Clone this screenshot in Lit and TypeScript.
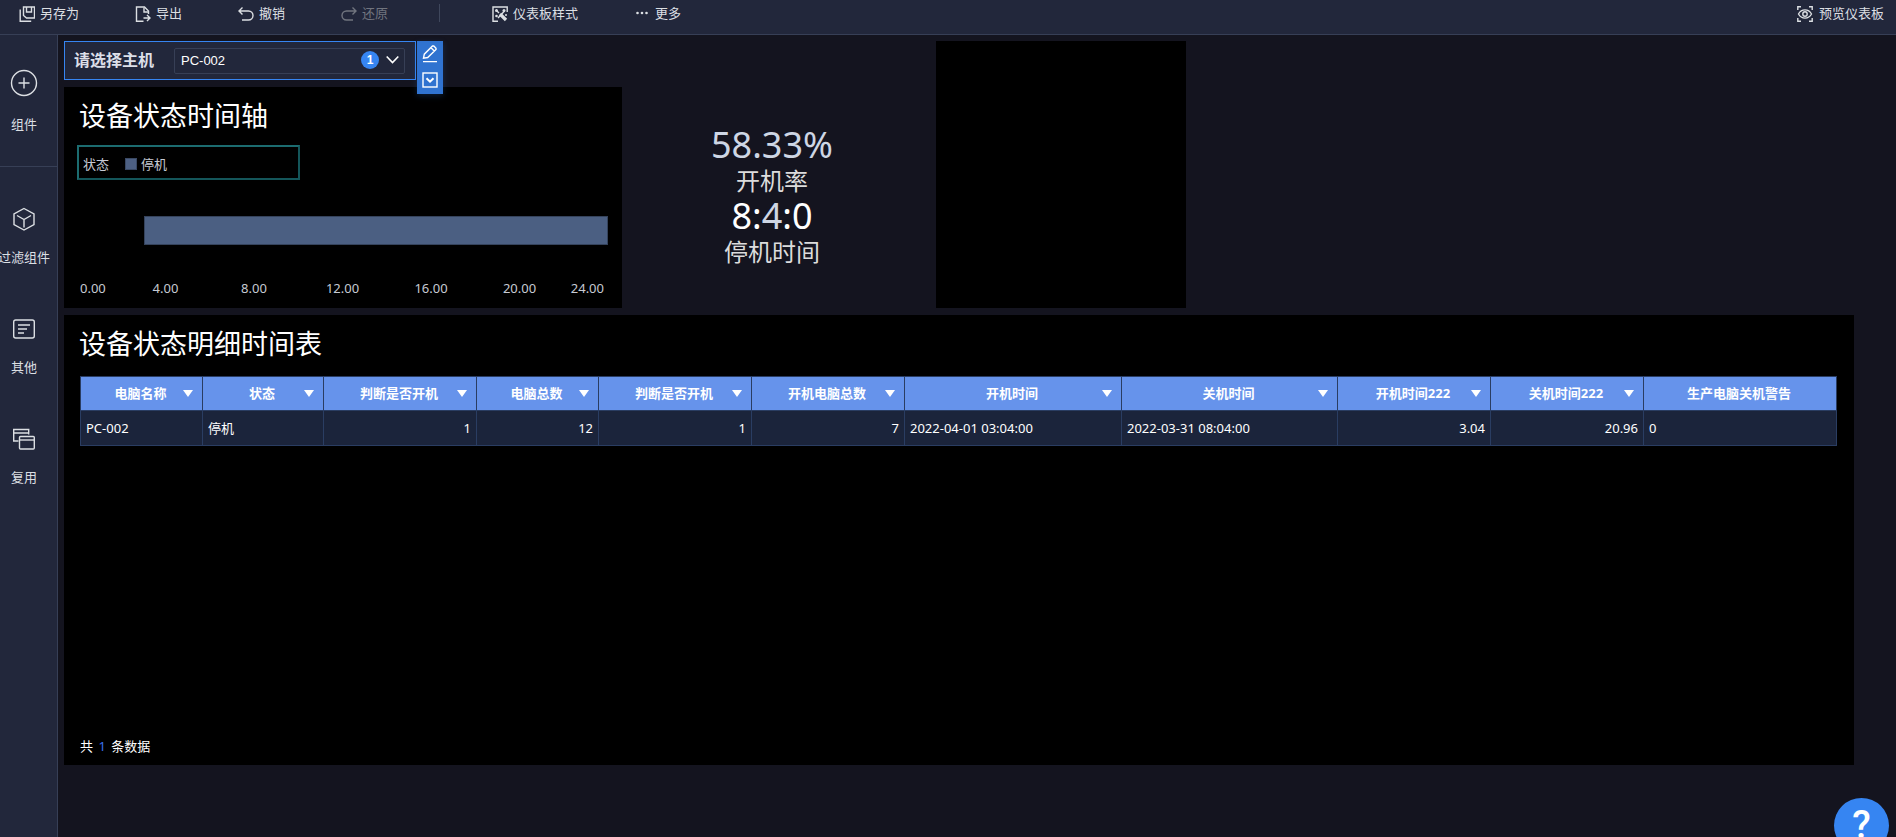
import { LitElement, html, css, svg } from "lit";
import { customElement } from "lit/decorators.js";

const icons = {
  save: svg`<path d="M4.500 1h11v11h-8l-3-2.500z"/><path d="M7.500 1v5h5V1M1.200 3.500v11.700h11"/>`,
  export: svg`<path d="M8.500 15.200h-7V1h8l4 4v3"/><path d="M9 1.500V6h4.500M8.500 12h6M12 9l3 3-3 3"/>`,
  undo: svg`<path d="M4.500 1.500L1 5l3.500 3.500M1 5h9.500a4.500 4.500 0 0 1 0 9H4"/>`,
  redo: svg`<path d="M11.500 1.500L15 5l-3.500 3.500M15 5H5.500a4.500 4.500 0 0 0 0 9H12"/>`,
  style: svg`<path d="M15.200 6V1H1v14.200h5"/><path d="M8 8l6 6" stroke-width="3.200"/><path d="M4 4l3 3M6 12l6.500-7"/><g fill="currentColor" stroke="none"><circle cx="4.500" cy="4.500" r="1.500"/><circle cx="12" cy="4.500" r="1.500"/><circle cx="4.500" cy="10" r="1.300"/><circle cx="14" cy="9" r="1"/></g>`,
  more: svg`<g fill="currentColor" stroke="none"><circle cx="3.500" cy="7" r="1.300"/><circle cx="8" cy="7" r="1.300"/><circle cx="12.500" cy="7" r="1.300"/></g>`,
  preview: svg`<path d="M.800 4V.800H4M12 .800h3.200V4M15.200 12v3.200H12M4 15.200H.800V12"/><path d="M1.500 8C4.500 2.500 11.500 2.500 14.500 8C11.500 13.500 4.500 13.500 1.500 8z"/><circle cx="8" cy="8" r="2.200"/>`,
  plus: svg`<circle cx="14" cy="14" r="12.500"/><path d="M14 8.500v11M8.500 14h11"/>`,
  cube: svg`<path d="M14 3.500l10 5.500v10.500l-10 5.500-10-5.500V9z"/><path d="M7 10.500l7 4 7-4M14 14.500v8"/>`,
  other: svg`<rect x="3.700" y="5" width="20.600" height="18" rx="2"/><path d="M8 10h12M8 14h9M8 18h6"/>`,
  reuse: svg`<path d="M8.500 16H3.700V4.500h15v5M3.700 8h15"/><rect x="9.500" y="11.500" width="14.800" height="12.500" rx="1"/><path d="M9.500 15h15"/>`,
};

const icon = (name: keyof typeof icons, size: number) => html`
  <svg class="icon" width=${size} height=${size} viewBox="0 0 ${size} ${size}" aria-hidden="true">${icons[name]}</svg>
`;

const base = css`
  * { box-sizing: border-box; }
  button {
    font: inherit;
    color: inherit;
    background: none;
    border: 0;
    padding: 0;
    cursor: pointer;
  }
  .icon {
    display: block;
    flex: none;
    fill: none;
    stroke: currentColor;
    stroke-width: 1.4;
  }
`;

@customElement("app-toolbar")
class AppToolbar extends LitElement {
  static styles = [base, css`
    :host {
      display: flex;
      align-items: flex-start;
      height: 35px;
      padding: 4px 12px 0 19px;
      background: #22273b;
      border-bottom: 1px solid #373f56;
      color: #dcdfe3;
    }
    .item {
      display: flex;
      align-items: center;
      gap: 5px;
      height: 20px;
      margin-right: 56px;
      line-height: 18px;
      white-space: nowrap;
    }
    .item span { padding-bottom: 2px; }
    .item:disabled { color: #71757f; cursor: default; }
    .divider { width: 1px; height: 18px; margin-right: 52px; background: #3f475c; }
    .before { margin-right: 51px; }
    .end { margin: 0 0 0 auto; gap: 6px; }
  `];
  render() {
    return html`
      <button class="item">${icon("save", 16)}<span>另存为</span></button>
      <button class="item">${icon("export", 16)}<span>导出</span></button>
      <button class="item">${icon("undo", 16)}<span>撤销</span></button>
      <button class="item before" disabled>${icon("redo", 16)}<span>还原</span></button>
      <span class="divider"></span>
      <button class="item">${icon("style", 16)}<span>仪表板样式</span></button>
      <button class="item">${icon("more", 16)}<span>更多</span></button>
      <button class="item end">${icon("preview", 16)}<span>预览仪表板</span></button>
    `;
  }
}

@customElement("app-sidebar")
class AppSidebar extends LitElement {
  static styles = [base, css`
    :host {
      display: block;
      width: 58px;
      flex: none;
      overflow: hidden;
      background: #22273b;
      border-right: 1px solid #373f56;
      color: #dcdfe3;
    }
    .group { padding-top: 34px; }
    .group + .group { padding-top: 38px; border-top: 1px solid #373f56; }
    .item {
      display: flex;
      flex-direction: column;
      align-items: center;
      gap: 14px;
      width: 48px;
      margin-bottom: 48px;
      line-height: 20px;
      white-space: nowrap;
    }
    .add { gap: 17px; margin-bottom: 32px; }
  `];
  render() {
    return html`
      <div class="group">
        <button class="item add">${icon("plus", 28)}<span>组件</span></button>
      </div>
      <div class="group">
        <button class="item">${icon("cube", 28)}<span>过滤组件</span></button>
        <button class="item">${icon("other", 28)}<span>其他</span></button>
        <button class="item">${icon("reuse", 28)}<span>复用</span></button>
      </div>
    `;
  }
}

@customElement("host-filter")
class HostFilter extends LitElement {
  static styles = [base, css`
    :host {
      position: relative;
      display: flex;
      align-items: center;
      width: 352px;
      height: 39px;
      padding: 0 10px 0 9px;
      background: #22273b;
      border: 1px solid #3685f2;
    }
    .label { width: 100px; padding-bottom: 2px; color: #dcdfe8; font-size: 16px; font-weight: 700; white-space: nowrap; }
    .box { position: relative; flex: 1; display: flex; }
    .select {
      appearance: none;
      width: 100%;
      height: 26px;
      padding: 0 50px 1px 6px;
      border: 1px solid #373f56;
      border-radius: 2px;
      background: transparent;
      color: #fff;
      font: 13px "Liberation Sans", sans-serif;
    }
    .marks {
      position: absolute;
      right: 6px;
      top: 3px;
      display: flex;
      align-items: center;
      gap: 7px;
      pointer-events: none;
      color: #fff;
    }
    .count {
      width: 18px;
      height: 18px;
      border-radius: 50%;
      background: #3685f2;
      font: 700 12px/18px "Liberation Sans", sans-serif;
      text-align: center;
    }
    .marks .icon { stroke-width: 1.6; }
    .tools {
      position: absolute;
      left: 352px;
      top: -1px;
      z-index: 1;
      display: flex;
      flex-direction: column;
      align-items: center;
      gap: 9px;
      width: 26px;
      height: 53px;
      padding-top: 4px;
      background: #3073d0;
      color: #fff;
      box-shadow: 0 2px 6px rgba(48, 115, 208, 0.25);
    }
  `];
  render() {
    return html`
      <label class="label" for="host">请选择主机</label>
      <div class="box">
        <select class="select" id="host"><option>PC-002</option></select>
        <div class="marks">
          <span class="count">1</span>
          <svg class="icon" width="13" height="10" viewBox="0 0 13 10"><path d="M.7 1.500l5.800 6 5.800-6"/></svg>
        </div>
      </div>
      <div class="tools">
        <button aria-label="编辑">
          <svg class="icon" width="16" height="18" viewBox="0 0 16 18"><path d="M1.500 13.200l.8-4L10.500 1h1.300l2.200 2.200v1.300L5.700 12.500zM9 2.800l3.300 3.300M1 16.600h14"/></svg>
        </button>
        <button aria-label="更多">
          <svg class="icon" width="16" height="16" viewBox="0 0 16 16"><rect x="1" y="1" width="14" height="14"/><path d="M4.500 6.200L8 9.700l3.500-3.500" stroke-width="2"/></svg>
        </button>
      </div>
    `;
  }
}

@customElement("status-timeline")
class StatusTimeline extends LitElement {
  private ticks = [0, 4, 8, 12, 16, 20, 24];
  private start = 3.04;
  static styles = [base, css`
    :host { display: block; padding: 11px 14px 10px 13px; background: #000; }
    .title { margin: 0 2px 11px; font-size: 27px; line-height: 36px; font-weight: 400; color: #fff; }
    .legend {
      display: flex;
      align-items: center;
      width: 42%;
      height: 35px;
      padding: 2px 0 0 4px;
      border: 2px solid #14565a;
      border-top-color: #1c6c70;
      border-left-color: #1c6c70;
      color: #c6cad3;
    }
    .swatch { width: 12px; height: 12px; margin: 0 4px 0 16px; background: #4d6083; border: 1px solid #3a4964; }
    .plot { display: flex; justify-content: flex-end; margin: 36px 0 33px; }
    .bar { height: 29px; background: #4b5f82; border: 1px solid #35435c; }
    .axis { display: grid; grid-template-columns: 2fr 4fr 4fr 4fr 4fr 4fr 2fr; line-height: 20px; color: #c6cad3; }
    .tick { text-align: center; }
    .tick:first-child { padding-left: 3px; text-align: left; }
    .tick:last-child { padding-right: 4px; text-align: right; }
  `];
  render() {
    return html`
      <h2 class="title">设备状态时间轴</h2>
      <div class="legend"><span>状态</span><span class="swatch"></span><span>停机</span></div>
      <div class="plot"><div class="bar" style="width:${((24 - this.start) / 24) * 100}%"></div></div>
      <div class="axis">${this.ticks.map((t) => html`<span class="tick">${t.toFixed(2)}</span>`)}</div>
    `;
  }
}

@customElement("status-table")
class StatusTable extends LitElement {
  private columns = [
    { name: "电脑名称", value: "PC-002", width: 122 },
    { name: "状态", value: "停机", width: 121 },
    { name: "判断是否开机", value: "1", width: 153, num: true },
    { name: "电脑总数", value: "12", width: 122, num: true },
    { name: "判断是否开机", value: "1", width: 153, num: true },
    { name: "开机电脑总数", value: "7", width: 153, num: true },
    { name: "开机时间", value: "2022-04-01 03:04:00", width: 217 },
    { name: "关机时间", value: "2022-03-31 08:04:00", width: 216 },
    { name: "开机时间222", value: "3.04", width: 153, num: true },
    { name: "关机时间222", value: "20.96", width: 153, num: true },
    { name: "生产电脑关机警告", value: "0", width: 193, plain: true },
  ];
  static styles = [base, css`
    :host {
      display: flex;
      flex-direction: column;
      min-height: 450px;
      padding: 11px 17px 9px 16px;
      background: #000;
      color: #fff;
    }
    .title { margin: 0 0 14px -1px; font-size: 27px; line-height: 36px; font-weight: 400; }
    .table { width: 100%; table-layout: fixed; border-collapse: collapse; }
    .head, .cell { border: 1px solid #2a3d62; white-space: nowrap; }
    .head { position: relative; height: 34px; padding: 0 2px 2px 0; background: #6693eb; font-weight: 700; text-align: center; }
    .cell { height: 35px; padding: 0 5px 1px; background: #1b243b; text-align: left; }
    .num { text-align: right; }
    .sort {
      position: absolute;
      right: 9px;
      top: 13px;
      width: 10px;
      height: 7px;
      background: #fff;
      clip-path: polygon(0 0, 100% 0, 50% 100%);
    }
    .total { margin: auto 0 0; line-height: 20px; }
    .count { margin: 0 2px; color: #3a70f0; }
  `];
  render() {
    const sum = this.columns.reduce((a, c) => a + c.width, 0);
    return html`
      <h2 class="title">设备状态明细时间表</h2>
      <table class="table">
        <colgroup>${this.columns.map((c) => html`<col style="width:${(c.width / sum) * 100}%">`)}</colgroup>
        <thead>
          <tr>${this.columns.map((c) => html`<th class="head">${c.name}${c.plain ? "" : html`<button class="sort" aria-label="排序"></button>`}</th>`)}</tr>
        </thead>
        <tbody>
          <tr>${this.columns.map((c) => html`<td class="cell ${c.num ? "num" : ""}">${c.value}</td>`)}</tr>
        </tbody>
      </table>
      <p class="total">共<span class="count"> 1 </span>条数据</p>
    `;
  }
}

@customElement("app-root")
class AppRoot extends LitElement {
  static styles = [base, css`
    :host {
      position: relative;
      display: flex;
      flex-direction: column;
      height: 100vh;
      overflow: hidden;
      background: #14141f;
      font: 13px/20px "Noto Sans", "Noto Sans CJK SC", sans-serif;
    }
    .body { display: flex; flex: 1; min-height: 0; }
    .board {
      flex: 1;
      display: grid;
      grid-template-columns: 558fr 300fr 250fr 661fr;
      align-content: start;
      gap: 7px;
      padding: 6px 42px 6px 6px;
    }
    .left { display: flex; flex-direction: column; gap: 7px; }
    .blank { background: #000; }
    .wide { grid-column: 1 / -1; }
    .kpis { padding: 83px 14px 0 0; text-align: center; }
    .value { font-size: 36px; line-height: 42px; color: #ced6e4; }
    .bright { color: #fff; }
    .name { font-size: 24px; line-height: 29px; color: #dcdcdc; }
    .help {
      position: absolute;
      right: 7px;
      bottom: -16px;
      width: 55px;
      height: 55px;
      border-radius: 50%;
      background: #3685f2;
      color: #fff;
      font: 500 38px/55px Roboto, sans-serif;
      text-align: center;
    }
  `];
  render() {
    return html`
      <app-toolbar></app-toolbar>
      <div class="body">
        <app-sidebar></app-sidebar>
        <main class="board">
          <div class="left">
            <host-filter></host-filter>
            <status-timeline></status-timeline>
          </div>
          <section class="kpis">
            <div class="value">58.33%</div>
            <div class="name">开机率</div>
            <div class="value"><span class="bright">8:</span>4<span class="bright">:0</span></div>
            <div class="name">停机时间</div>
          </section>
          <div class="blank"></div>
          <status-table class="wide"></status-table>
        </main>
      </div>
      <button class="help" aria-label="帮助">?</button>
    `;
  }
}
